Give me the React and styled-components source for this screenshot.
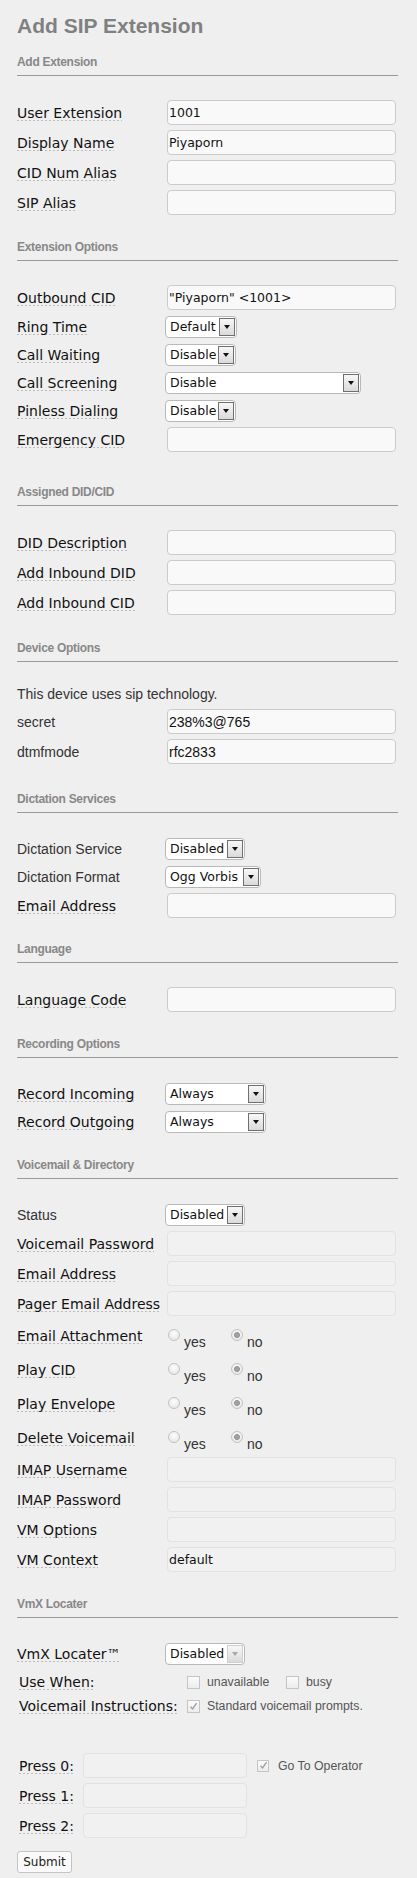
import React from "react";
import styled, { createGlobalStyle, css } from "styled-components";

const GlobalStyle = createGlobalStyle`
  html, body {
    margin: 0;
    padding: 0;
    background: #efefef;
  }
`;

const verdana = `"DejaVu Sans", Verdana, sans-serif`;
const arial = `"Liberation Sans", Arial, sans-serif`;

// flex column so that row / heading margins add up instead of collapsing
const Page = styled.form`
  display: flex;
  flex-direction: column;
  padding: 14px 19px 4px 17px;
  background: #efefef;
  min-height: 1878px;
  box-sizing: border-box;
`;

const Title = styled.h2`
  margin: 0;
  font: bold 21px/24px ${arial};
  color: #808080;
`;

const SectionTitle = styled.h3`
  margin: ${(p) => p.$gap ?? 20}px 0 24px;
  padding-bottom: 6px;
  border-bottom: 1px solid #999;
  font: bold 12px/14px ${arial};
  letter-spacing: -0.3px;
  color: #888;
`;

const Row = styled.div`
  display: flex;
  align-items: center;
  height: ${(p) => p.$h || 25}px;
  flex-shrink: 0;
  margin-bottom: ${(p) => p.$mb ?? 5}px;
  margin-top: ${(p) => p.$mt || 0}px;
`;

const Label = styled.div`
  width: ${(p) => p.$w || 150}px;
  padding-left: ${(p) => p.$indent || 0}px;
  box-sizing: border-box;
  flex-shrink: 0;
  font-size: 14px;
  line-height: 16px;
  white-space: nowrap;
  ${(p) =>
    p.$plain
      ? css`
          font-family: ${arial};
          color: #333;
        `
      : css`
          font-family: ${verdana};
          color: #111;
        `}
`;

const Tip = styled.span`
  display: inline-block;
  background-image: linear-gradient(to right, #bdbdbd 2px, transparent 2px);
  background-size: 4px 1px;
  background-repeat: repeat-x;
  background-position: left bottom;
`;

const Note = styled.p`
  margin: 0 0 7px;
  font: 14px/16px ${arial};
  color: #333;
`;

const TextInput = styled.input`
  width: ${(p) => p.$w || 229}px;
  height: 25px;
  box-sizing: border-box;
  margin: 0;
  padding: 0 1px;
  border-radius: 4px;
  outline: none;
  color: #111;
  font-size: ${(p) => (p.$arial ? "14px" : "12.5px")};
  font-family: ${(p) => (p.$arial ? arial : verdana)};
  border: 1px solid ${(p) => (p.$off ? "#e2e2e2" : "#cbcbcb")};
  background: ${(p) => (p.$off ? "#f1f1f1" : "#f9f9f9")};
`;

const SelectBox = styled.div`
  display: inline-flex;
  align-items: stretch;
  width: ${(p) => p.$w}px;
  height: 22px;
  margin-left: -2px;
  padding: 1px;
  box-sizing: border-box;
  border: 1px solid #b9b9b9;
  border-radius: 4px;
  background: #fff;
`;

const SelectValue = styled.span`
  flex: 1;
  padding-left: 3px;
  font: 12.5px/18px ${verdana};
  color: #111;
  white-space: nowrap;
  overflow: hidden;
`;

const SelectArrow = styled.span`
  width: 16px;
  flex-shrink: 0;
  box-sizing: border-box;
  display: flex;
  align-items: center;
  justify-content: center;
  border: 1px solid ${(p) => (p.$off ? "#cfcfcf" : "#6f6f6f")};
  background: linear-gradient(#f7f7f7, #dadada);
  &::after {
    content: "";
    border-left: 3.5px solid transparent;
    border-right: 3.5px solid transparent;
    border-top: 4px solid ${(p) => (p.$off ? "#a8a8a8" : "#111")};
  }
`;

const Options = styled.div`
  display: flex;
  align-self: stretch;
  margin-left: 1px;
`;

const RadioOption = styled.label`
  display: flex;
  align-items: flex-start;
  width: 63px;
  font: 14px/16px ${arial};
  color: #333;
  span {
    margin: 13px 0 0 4px;
  }
`;

const RadioDot = styled.i`
  width: 12px;
  height: 12px;
  margin-top: 8px;
  box-sizing: border-box;
  border-radius: 50%;
  border: 1px solid #c2c2c2;
  background: radial-gradient(circle at 50% 35%, #fdfdfd, #e2e2e2);
  display: flex;
  align-items: center;
  justify-content: center;
  &::after {
    content: "";
    width: 6px;
    height: 6px;
    border-radius: 50%;
    box-sizing: border-box;
    background: ${(p) => (p.$checked ? "#a3a3a3" : "transparent")};
    border: 1px solid ${(p) => (p.$checked ? "#8e8e8e" : "transparent")};
  }
`;

const CheckOption = styled.label`
  display: flex;
  align-items: center;
  width: ${(p) => (p.$w ? `${p.$w}px` : "auto")};
  margin-left: ${(p) => p.$ml || 0}px;
  font: 12.3px/14px ${arial};
  color: #555;
  white-space: nowrap;
`;

const CheckBox = styled.i`
  width: ${(p) => p.$size || 13}px;
  height: ${(p) => p.$size || 13}px;
  margin-right: ${(p) => p.$gap || 7}px;
  box-sizing: border-box;
  flex-shrink: 0;
  border: 1px solid #c4c4c4;
  background: linear-gradient(#fbfbfb, #ececec);
  display: flex;
  align-items: center;
  justify-content: center;
`;

const SubmitButton = styled.button`
  align-self: flex-start;
  margin-top: 8px;
  width: 55px;
  height: 22px;
  padding: 0;
  border: 1px solid #c4c4c4;
  border-radius: 3px;
  background: #fafafa;
  font: 12px ${verdana};
  color: #222;
`;

const Select = ({ w, value, off }) => (
  <SelectBox $w={w}>
    <SelectValue>{value}</SelectValue>
    <SelectArrow $off={off} />
  </SelectBox>
);

const Check = ({ checked, size, gap }) => (
  <CheckBox $size={size} $gap={gap}>
    {checked && (
      <svg width="9" height="9" viewBox="0 0 9 9">
        <path d="M1.5 4.8 L3.6 7 L7.6 1.2" fill="none" stroke="#a0a0a0" strokeWidth="1.4" />
      </svg>
    )}
  </CheckBox>
);

const InputRow = ({ label, value, plain, arialValue, off }) => (
  <Row $h={25}>
    <Label $plain={plain}>{plain ? label : <Tip>{label}</Tip>}</Label>
    <TextInput defaultValue={value} $arial={arialValue} $off={off} readOnly={off} />
  </Row>
);

const SelectRow = ({ label, value, w, plain, off }) => (
  <Row $h={23}>
    <Label $plain={plain}>{plain ? label : <Tip>{label}</Tip>}</Label>
    <Select w={w} value={value} off={off} />
  </Row>
);

const RadioRow = ({ label }) => (
  <Row $h={29}>
    <Label>
      <Tip>{label}</Tip>
    </Label>
    <Options>
      <RadioOption>
        <RadioDot />
        <span>yes</span>
      </RadioOption>
      <RadioOption>
        <RadioDot $checked />
        <span>no</span>
      </RadioOption>
    </Options>
  </Row>
);

const PressRow = ({ n, extra }) => (
  <Row $h={25} $mt={n === 0 ? 35 : 0}>
    <Label $w={66} $indent={2}>
      <Tip>Press {n}:</Tip>
    </Label>
    <TextInput $w={164} $off readOnly />
    {extra}
  </Row>
);

export default function App() {
  return (
    <>
      <GlobalStyle />
      <Page onSubmit={(e) => e.preventDefault()}>
        <Title>Add SIP Extension</Title>

        <SectionTitle $gap={17}>Add Extension</SectionTitle>
        <InputRow label="User Extension" value="1001" />
        <InputRow label="Display Name" value="Piyaporn" />
        <InputRow label="CID Num Alias" value="" />
        <InputRow label="SIP Alias" value="" />

        <SectionTitle>Extension Options</SectionTitle>
        <InputRow label="Outbound CID" value={'"Piyaporn" <1001>'} />
        <SelectRow label="Ring Time" value="Default" w={72} />
        <SelectRow label="Call Waiting" value="Disable" w={71} />
        <SelectRow label="Call Screening" value="Disable" w={196} />
        <SelectRow label="Pinless Dialing" value="Disable" w={71} />
        <InputRow label="Emergency CID" value="" />

        <SectionTitle $gap={28}>Assigned DID/CID</SectionTitle>
        <InputRow label="DID Description" value="" />
        <InputRow label="Add Inbound DID" value="" />
        <InputRow label="Add Inbound CID" value="" />

        <SectionTitle $gap={21}>Device Options</SectionTitle>
        <Note>This device uses sip technology.</Note>
        <InputRow label="secret" value="238%3@765" plain arialValue />
        <InputRow label="dtmfmode" value="rfc2833" plain arialValue />

        <SectionTitle $gap={23}>Dictation Services</SectionTitle>
        <SelectRow label="Dictation Service" value="Disabled" w={80} plain />
        <SelectRow label="Dictation Format" value="Ogg Vorbis" w={96} plain />
        <InputRow label="Email Address" value="" />

        <SectionTitle $gap={19}>Language</SectionTitle>
        <InputRow label="Language Code" value="" />

        <SectionTitle>Recording Options</SectionTitle>
        <SelectRow label="Record Incoming" value="Always" w={101} />
        <SelectRow label="Record Outgoing" value="Always" w={101} />

        <SectionTitle>Voicemail &amp; Directory</SectionTitle>
        <SelectRow label="Status" value="Disabled" w={80} plain />
        <InputRow label="Voicemail Password" value="" off />
        <InputRow label="Email Address" value="" off />
        <InputRow label="Pager Email Address" value="" off />
        <RadioRow label="Email Attachment" />
        <RadioRow label="Play CID" />
        <RadioRow label="Play Envelope" />
        <RadioRow label="Delete Voicemail" />
        <InputRow label="IMAP Username" value="" off />
        <InputRow label="IMAP Password" value="" off />
        <InputRow label="VM Options" value="" off />
        <InputRow label="VM Context" value="default" off />

        <SectionTitle>VmX Locater</SectionTitle>
        <SelectRow label="VmX Locater™" value="Disabled" w={80} off />
        <Row $h={24} $mb={0}>
          <Label $w={170} $indent={2}>
            <Tip>Use When:</Tip>
          </Label>
          <CheckOption $w={99}>
            <Check />
            unavailable
          </CheckOption>
          <CheckOption>
            <Check />
            busy
          </CheckOption>
        </Row>
        <Row $h={24} $mb={0}>
          <Label $w={170} $indent={2}>
            <Tip>Voicemail Instructions:</Tip>
          </Label>
          <CheckOption>
            <Check checked />
            Standard voicemail prompts.
          </CheckOption>
        </Row>

        <PressRow
          n={0}
          extra={
            <CheckOption $ml={10}>
              <Check checked size={12} gap={9} />
              Go To Operator
            </CheckOption>
          }
        />
        <PressRow n={1} />
        <PressRow n={2} />

        <SubmitButton type="submit">Submit</SubmitButton>
      </Page>
    </>
  );
}
